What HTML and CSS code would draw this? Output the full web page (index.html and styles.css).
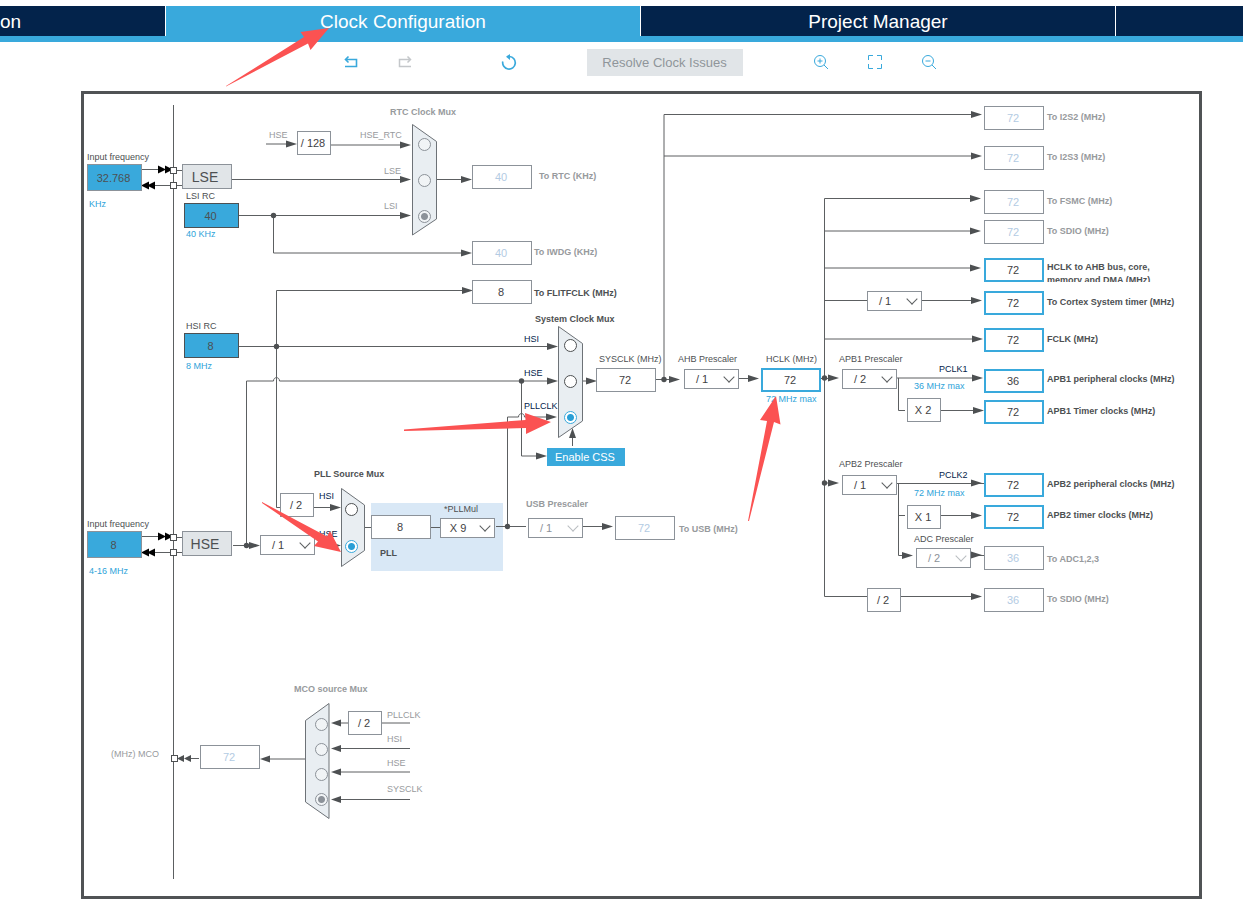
FILE: index.html
```html
<!DOCTYPE html>
<html lang="en">
<head>
<meta charset="utf-8">
<title>Clock Configuration</title>
<link rel="stylesheet" href="styles.css">
</head>
<body>
<nav class="tabs">
  <a class="tab tab-clipped" href="#pinout">on</a>
  <a class="tab tab-active" href="#clock" aria-current="page">Clock Configuration</a>
  <a class="tab" href="#project">Project Manager</a>
  <a class="tab" href="#tools" aria-label="Tools"></a>
</nav>

<div class="toolbar">
  <div class="group">
    <button class="icon" type="button" aria-label="Undo"><svg viewBox="0 0 20 20"><path d="M4 14.500H15.500V7.500H4.500M7.500 4.500L4.500 7.500L7.500 10.500" stroke-width="1.600"/></svg></button>
    <button class="icon icon-off" type="button" aria-label="Redo" disabled><svg viewBox="0 0 20 20"><path d="M16 14.500H4.500V7.500H15.500M12.500 4.500L15.500 7.500L12.500 10.500" stroke-width="1.500"/></svg></button>
  </div>
  <button class="icon" type="button" aria-label="Reset"><svg viewBox="0 0 20 20"><path d="M8.500 4.500H10.500A6.300 6.300 0 1 1 3.800 9.500" stroke-width="1.700"/><path class="solid" d="M7 4.800L11 2V8Z"/></svg></button>
  <button class="resolve" type="button" disabled>Resolve Clock Issues</button>
  <div class="group">
    <button class="icon" type="button" aria-label="Zoom in"><svg viewBox="0 0 20 20"><circle cx="9" cy="9" r="5.500"/><path d="M13 13L17 17M6.500 9H11.500M9 6.500V11.500"/></svg></button>
    <button class="icon" type="button" aria-label="Fit to window"><svg viewBox="0 0 20 20"><path d="M3.500 8V3.500H8M12 3.500H16.500V8M16.500 12V16.500H12M8 16.500H3.500V12"/></svg></button>
    <button class="icon" type="button" aria-label="Zoom out"><svg viewBox="0 0 20 20"><circle cx="9" cy="9" r="5.500"/><path d="M13 13L17 17M6.500 9H11.500"/></svg></button>
  </div>
</div>

<main class="frame">
  <div class="diagram" id="diagram">
    <svg class="layer" id="wires" viewBox="84 94 1115 802" aria-hidden="true"></svg>
  </div>
</main>
<script src="diagram.js"></script>
</body>
</html>
```
FILE: styles.css
```css
* { box-sizing: border-box; }

body {
  margin: 0;
  padding-top: 6px;
  background: #fff;
  color: #4d5052;
  font-family: "Liberation Sans", Arial, sans-serif;
}

.tabs {
  display: grid;
  grid-template-columns: 166px 1fr 1fr 127px;
  height: 36px;
  border-bottom: 6px solid #39a9dc;
}
.tab {
  display: block;
  height: 30px;
  border-right: 1px solid #fff;
  background: #03234b;
  color: #fff;
  font-size: 19px;
  line-height: 32px;
  text-align: center;
  text-decoration: none;
}
.tab:last-child { border-right: 0; }
.tab-clipped { text-align: left; }
.tab-active { background: #39a9dc; }

.toolbar {
  display: flex;
  justify-content: center;
  align-items: center;
  gap: 68px;
  height: 49px;
  padding: 0 0 8px 36px;
}
.group { display: flex; gap: 34px; }
.group:first-child { margin-right: 16px; }
.icon {
  width: 20px;
  height: 22px;
  padding: 0 0 2px;
  border: 0;
  background: none;
  color: #39a9dc;
}
.icon-off { color: #c4c7ca; }
.icon svg {
  display: block;
  width: 20px;
  height: 20px;
  fill: none;
  stroke: currentColor;
}
.icon .solid { fill: currentColor; stroke: none; }
.resolve {
  width: 156px;
  height: 27px;
  padding: 0;
  border: 0;
  background: #e1e5e8;
  color: #8f959a;
  font: 13px "Liberation Sans", Arial, sans-serif;
}

.frame {
  margin: 0 41px 21px 81px;
  border: 3px solid #505355;
}
.diagram {
  position: relative;
  height: 802px;
}
.layer {
  position: absolute;
  top: 0;
  left: 0;
  width: 1115px;
  height: 802px;
  overflow: visible;
  pointer-events: none;
}
.wire { fill: none; stroke: #5c5f61; }
.head { fill: #4d5052; }
.ink { fill: #000; }
.port { fill: #fff; stroke: #4d5052; }
.mux { fill: #e9eef2; stroke: #6d7277; }
.pll { fill: #d9e8f6; }
.pointer { fill: #fb5252; }

.box {
  position: absolute;
  width: 60px;
  height: 24px;
  margin: 0;
  padding: 0 2px 0 0;
  border: 1px solid #8c9299;
  border-radius: 0;
  background: #fff;
  color: #3f4244;
  font: 11px/22px "Liberation Sans", Arial, sans-serif;
  text-align: center;
}
.box:disabled { color: #b3cbe3; }
.key { border: 2px solid #39a9dc; line-height: 20px; }
.fixed { width: 34px; }
.crystal { width: 55px; height: 27px; background: #39a9dc; color: #4d5052; }
.rc { width: 55px; height: 25px; border-color: #4d5052; background: #39a9dc; color: #4d5052; }
.osc { width: 50px; height: 25px; padding-right: 4px; background: #e1e5e8; font-size: 14px; color: #4d5052; }
.css-on { width: 78px; height: 18px; border: 0; background: #39a9dc; color: #fff; line-height: 18px; }

.pick {
  position: absolute;
  width: 55px;
  height: 20px;
}
.pick select {
  width: 100%;
  height: 100%;
  margin: 0;
  padding: 0 19px 0 0;
  border: 1px solid #8c9299;
  border-radius: 0;
  background: #fff;
  color: #3f4244;
  font: 11px "Liberation Sans", Arial, sans-serif;
  text-align: center;
  appearance: none;
  opacity: 1;
}
.pick select:disabled { color: #8c9299; }
.pick::after {
  content: "";
  position: absolute;
  top: 4px;
  right: 6px;
  width: 7px;
  height: 7px;
  border: solid #5c5f61;
  border-width: 0 1px 1px 0;
  transform: rotate(45deg);
  pointer-events: none;
}
.pick-off::after { border-color: #b9bdc1; }

.choice {
  position: absolute;
  width: 13px;
  height: 13px;
  margin: 0;
  border: 1px solid #4d5052;
  border-radius: 50%;
  background: #fff;
  appearance: none;
}
.choice:checked {
  border-color: #39a9dc;
  background: radial-gradient(circle, #2a9fd6 3px, #fff 4px);
}
.choice:disabled { border-color: #8c9299; background: #f1f4f6; }
.choice:disabled:checked { background: radial-gradient(circle, #8c9299 3px, #f1f4f6 4px); }

.text {
  position: absolute;
  font: 9px/13px "Liberation Sans", Arial, sans-serif;
  white-space: nowrap;
}
.bold { font-weight: 700; }
.dim { color: #979a9d; }
.blue { color: #2ea3d9; }
.navy { color: #03234b; }
.wrap { width: 130px; height: 21px; overflow: hidden; white-space: normal; }
```
FILE: diagram.js
```javascript
const ORIGIN = { x: 84, y: 94 };
const diagram = document.getElementById("diagram");
const wires = document.getElementById("wires");

function shape(parent, tag, cls, attrs) {
  const el = document.createElementNS("http://www.w3.org/2000/svg", tag);
  el.setAttribute("class", cls);
  for (const key in attrs) el.setAttribute(key, attrs[key]);
  parent.appendChild(el);
}

function place(el, x, y) {
  el.style.left = x - ORIGIN.x + "px";
  el.style.top = y - ORIGIN.y + "px";
  diagram.appendChild(el);
  return el;
}

// Background of the PLL block, then every wire as one path.
shape(wires, "rect", "pll", { x: 371, y: 503, width: 132, height: 68 });
[
  "M173.500 105V879",
  "M142 169.500H171M142 185.500H171M177 170.500H182M177 185.500H182",
  "M142 536.500H171M142 552.500H171M177 537.500H182M177 552.500H182",
  "M266 144H290M331 145H405M232 179.500H405M239 215.500H405M273.500 215.500V253H465M436 179.500H465",
  "M276.500 507.500V290.500H465M239 346.500H550M276.500 507.500H280",
  "M246.500 545V381H273.500C273.500 376.500 279.500 376.500 279.500 381H550",
  "M521.500 381V456H540",
  "M314 507.500H334M233 545.500H255M315 545.500H334M364 527.500H371M431 527.500H440",
  "M496 526.500H526M507.500 526.500V417H518.500C518.500 412.500 524.500 412.500 524.500 417H550M583 526.500H606",
  "M582 381H590M656 379.500H672M664 379.500V114.500M664 114.500H975M664 156H975M739 378.500H751M821 378.500H832",
  "M824.500 198.500V596.500H867M824.500 198.500H974M824.500 231H974M824.500 268H974M824.500 300.500H867M922 300.500H974M824.500 339H974M824.500 483H832M901 596.500H974",
  "M897 378H975M898.500 378V410.500H905M941 410.500H975M897 483.500H984M898.500 483.500V555.500H905M898.500 515.500H905M941 515.500H975M971 555.500H984",
  "M572.500 446V436M305 759H268M199 758.500H186M348 723H338M382 723H410M338 748.500H410M338 772H410M338 799.500H410"
].forEach(d => shape(wires, "path", "wire", { d }));

// Arrow heads pointing right, left and up: tip position.
[[297,144],[411,145],[411,179.5],[411,215.5],[472,179.5],[472,253],[473,290.5],[558,346.5],[558,381],[557,417],
 [547,456],[341,507.5],[260,545.5],[341,545.5],[613,526.5],[597,381],[680,379.5],[759,378.5],[839,378],[839,483],
 [982,114.5],[982,156],[981,198.5],[981,231],[981,268],[982,300.5],[983,339],[983,378],[984,410.5],[982,483],
 [982,515.5],[913,555.5],[982,555],[982,596.5]
].forEach(([x, y]) => shape(wires, "path", "head", { d: `M${x} ${y}L${x - 11} ${y - 3.5}V${y + 3.5}Z` }));
[[260,759],[331,723],[331,748.5],[331,772],[331,799.5]]
  .forEach(([x, y]) => shape(wires, "path", "head", { d: `M${x} ${y}L${x + 10} ${y - 3.5}V${y + 3.5}Z` }));
shape(wires, "path", "head", { d: "M572.500 428L569 438H576Z" });
[[177,758.5],[184,758.5]]
  .forEach(([x, y]) => shape(wires, "path", "head", { d: `M${x} ${y}L${x + 7} ${y - 3.5}V${y + 3.5}Z` }));
[169.5, 536.5].forEach(y => [166, 173].forEach(x =>
  shape(wires, "path", "ink", { d: `M${x} ${y}L${x - 8} ${y - 4}V${y + 4}Z` })));
[185.5, 552.5].forEach(y => [141, 147].forEach(x =>
  shape(wires, "path", "ink", { d: `M${x} ${y}L${x + 8} ${y - 4}V${y + 4}Z` })));
[[171,168],[171,183],[171,535],[171,550],[172,756]]
  .forEach(([x, y]) => shape(wires, "rect", "port", { x: x - 0.5, y: y - 0.5, width: 6, height: 6 }));
[[273.5,215.5],[276.5,346.5],[246.5,545.5],[521.5,381],[507.5,526.5],[664,379.5],[824.5,378],[824.5,483]]
  .forEach(([cx, cy]) => shape(wires, "circle", "head", { cx, cy, r: 2.7 }));

[
  "412.500,124.500 436.500,141.500 436.500,219 412.500,235",
  "558.500,326.500 582.500,343.500 582.500,421 558.500,437.500",
  "341.500,488.500 364.500,505 364.500,550.500 341.500,566.500",
  "329,703.500 305.500,720.500 305.500,802 329,818.500"
].forEach(points => shape(wires, "polygon", "mux", { points }));

// Plain texts and field labels: [text, x, middle y, classes, id of the field].
const texts = [
  ["Input frequency", 87, 157, "", "lse-in"], ["KHz", 89, 204, "blue"],
  ["LSI RC", 186, 196, "", "lsi"], ["40 KHz", 186, 234, "blue"],
  ["HSI RC", 186, 326, "", "hsi"], ["8 MHz", 186, 366, "blue"],
  ["Input frequency", 87, 524, "", "hse-in"], ["4-16 MHz", 89, 571, "blue"],
  ["RTC Clock Mux", 390, 112, "bold dim"],
  ["HSE", 269, 135, "dim"], ["HSE_RTC", 360, 135, "dim", "rtc-0"],
  ["LSE", 384, 171, "dim", "rtc-1"], ["LSI", 384, 206, "dim", "rtc-2"],
  ["To RTC (KHz)", 539, 176, "bold dim", "rtc"],
  ["To IWDG (KHz)", 534, 252, "bold dim", "iwdg"],
  ["To FLITFCLK (MHz)", 534, 293, "bold", "flitf"],
  ["System Clock Mux", 535, 319, "bold"],
  ["HSI", 524, 339, "navy", "sys-0"], ["HSE", 524, 373, "navy", "sys-1"], ["PLLCLK", 524, 406, "navy", "sys-2"],
  ["SYSCLK (MHz)", 599, 359, "", "sysclk"], ["AHB Prescaler", 678, 359, "", "ahb"],
  ["HCLK (MHz)", 766, 359, "", "hclk"], ["72 MHz max", 766, 399, "blue"],
  ["APB1 Prescaler", 839, 359, "", "apb1"], ["APB2 Prescaler", 839, 464, "", "apb2"],
  ["PCLK1", 939, 369, "navy"], ["36 MHz max", 914, 386, "blue"],
  ["PCLK2", 939, 475, "navy"], ["72 MHz max", 914, 493, "blue"],
  ["ADC Prescaler", 914, 539, "", "adcdiv"],
  ["PLL Source Mux", 314, 474, "bold"], ["HSI", 319, 496, "navy", "pll-0"], ["HSE", 319, 534, "navy", "pll-1"],
  ["*PLLMul", 444, 509, "", "pllmul"], ["PLL", 380, 553, "bold", "pllin"],
  ["USB Prescaler", 526, 504, "bold dim", "usbdiv"], ["To USB (MHz)", 679, 529, "bold dim", "usb"],
  ["MCO source Mux", 294, 689, "bold dim"], ["(MHz) MCO", 111, 754, "dim", "mco"],
  ["PLLCLK", 387, 715, "dim", "mco-0"], ["HSI", 387, 739, "dim", "mco-1"],
  ["HSE", 387, 763, "dim", "mco-2"], ["SYSCLK", 387, 789, "dim", "mco-3"],
  ["To I2S2 (MHz)", 1047, 117, "bold dim", "i2s2"], ["To I2S3 (MHz)", 1047, 157, "bold dim", "i2s3"],
  ["To FSMC (MHz)", 1047, 201, "bold dim", "fsmc"], ["To SDIO (MHz)", 1047, 231, "bold dim", "sdio1"],
  ["HCLK to AHB bus, core, memory and DMA (MHz)", 1047, 267, "bold wrap", "ahbbus"],
  ["To Cortex System timer (MHz)", 1047, 302, "bold", "cortex"], ["FCLK (MHz)", 1047, 339, "bold", "fclk"],
  ["APB1 peripheral clocks (MHz)", 1047, 379, "bold", "apb1p"],
  ["APB1 Timer clocks (MHz)", 1047, 411, "bold", "apb1t"],
  ["APB2 peripheral clocks (MHz)", 1047, 484, "bold", "apb2p"],
  ["APB2 timer clocks (MHz)", 1047, 515, "bold", "apb2t"],
  ["To ADC1,2,3", 1047, 559, "bold dim", "adc"], ["To SDIO (MHz)", 1047, 599, "bold dim", "sdio2"]
];
texts.forEach(([text, x, y, cls, target]) => {
  const el = document.createElement(target ? "label" : "span");
  el.className = `text ${cls}`;
  el.textContent = text;
  if (target) el.htmlFor = target;
  place(el, x, y - 6);
});

// Value fields: [id, x, y, value, kind]; "off" fields are disabled.
[
  ["lse-in", 87, 164, "32.768", "crystal"], ["hse-in", 87, 531, "8", "crystal"],
  ["lsi", 184, 203, "40", "rc"], ["hsi", 184, 333, "8", "rc"],
  ["rtc", 472, 165, "40", "off"], ["iwdg", 472, 241, "40", "off"], ["flitf", 472, 280, "8", ""],
  ["sysclk", 596, 368, "72", ""], ["hclk", 761, 368, "72", "key"],
  ["pllin", 371, 515, "8", ""], ["usb", 615, 516, "72", "off"], ["mco", 200, 745, "72", "off"],
  ["i2s2", 984, 106, "72", "off"], ["i2s3", 984, 146, "72", "off"],
  ["fsmc", 984, 190, "72", "off"], ["sdio1", 984, 220, "72", "off"],
  ["ahbbus", 984, 258, "72", "key"], ["cortex", 984, 291, "72", "key"], ["fclk", 984, 328, "72", "key"],
  ["apb1p", 984, 369, "36", "key"], ["apb1t", 984, 400, "72", "key"],
  ["apb2p", 984, 473, "72", "key"], ["apb2t", 984, 505, "72", "key"],
  ["adc", 984, 546, "36", "off"], ["sdio2", 984, 588, "36", "off"]
].forEach(([id, x, y, value, kind]) => {
  const el = document.createElement("input");
  el.type = "text";
  el.id = id;
  el.value = value;
  el.className = `box ${kind}`;
  el.disabled = kind === "off";
  place(el, x, y);
});

// Fixed dividers and multipliers.
[["/ 128", 297, 131], ["/ 2", 280, 493], ["/ 2", 348, 711], ["/ 2", 867, 588], ["X 2", 907, 398], ["X 1", 907, 505]]
  .forEach(([text, x, y]) => {
    const el = document.createElement("span");
    el.className = "box fixed";
    el.textContent = text;
    place(el, x, y);
  });

[["LSE", 182, 164, "osc"], ["HSE", 182, 531, "osc"], ["Enable CSS", 547, 448, "css-on"]]
  .forEach(([text, x, y, cls]) => {
    const el = document.createElement("button");
    el.type = "button";
    el.className = `box ${cls}`;
    el.textContent = text;
    place(el, x, y);
  });

[
  ["hsediv", 260, 535, "/ 1"], ["pllmul", 440, 518, "X 9"], ["usbdiv", 528, 518, "/ 1", true],
  ["ahb", 684, 369, "/ 1"], ["cortexdiv", 867, 291, "/ 1"], ["apb1", 842, 369, "/ 2"],
  ["apb2", 842, 475, "/ 1"], ["adcdiv", 916, 548, "/ 2", true]
].forEach(([id, x, y, value, off]) => {
  const wrap = document.createElement("span");
  wrap.className = off ? "pick pick-off" : "pick";
  const select = document.createElement("select");
  select.id = id;
  select.disabled = Boolean(off);
  select.add(new Option(value));
  if (id === "hsediv") select.setAttribute("aria-label", "PLL HSE prescaler");
  if (id === "cortexdiv") select.setAttribute("aria-label", "Cortex timer prescaler");
  wrap.appendChild(select);
  place(wrap, x, y);
});

// Multiplexer inputs: [name, centre x, centre ys, selected index, disabled].
[
  ["rtc", 424, [144, 180, 216], 2, true],
  ["sys", 570, [345, 381, 417], 2, false],
  ["pll", 351, [509, 546], 1, false],
  ["mco", 321, [724, 749, 774, 799], 3, true]
].forEach(([name, x, ys, selected, off]) => ys.forEach((y, i) => {
  const el = document.createElement("input");
  el.type = "radio";
  el.name = name;
  el.id = `${name}-${i}`;
  el.className = "choice";
  el.checked = i === selected;
  el.disabled = off;
  place(el, x - 6, y - 6);
}));

// Red guide arrows lie above everything, tabs included.
const guides = wires.cloneNode(false);
guides.id = "guides";
diagram.appendChild(guides);
[
  "226,86 304,37 300.500,32 329,28 310.500,50 308,43.500 226,86.500",
  "404,429.500 525.500,420 525,413 551,422 526,434 526,428 404,431",
  "262,502 327,536.500 330,531 341,552 314,546 318,541.500 262,503",
  "748,521 767,421 760,420 776,396 780.500,424.500 774,422 749,521"
].forEach(points => shape(guides, "polygon", "pointer", { points }));
```
